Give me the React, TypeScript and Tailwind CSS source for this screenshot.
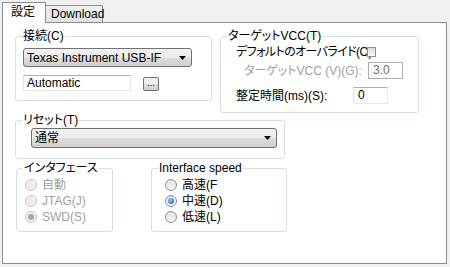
import React from 'react';

const font = "font-['Liberation_Sans','Noto_Sans_CJK_JP',sans-serif] [font-feature-settings:'palt']";

function Group({ title, className, children }: { title: string; className: string; children?: React.ReactNode }) {
  return (
    <div className={`relative border border-[#d5dfe5] rounded-[3px] ${className}`}>
      <span className="absolute -top-[8px] left-[6px] bg-white px-[1px] leading-[14px] text-black">{title}</span>
      {children}
    </div>
  );
}

function Combo({ text, className }: { text: string; className: string }) {
  return (
    <div
      className={`flex items-center justify-between border border-[#707070] rounded-[3px] bg-[linear-gradient(#f2f2f2_0%,#ebebeb_50%,#dddddd_50%,#cfcfcf_100%)] pl-[3px] pr-[5px] ${className}`}
    >
      <span className="leading-[14px]">{text}</span>
      <svg width="7" height="4" viewBox="0 0 7 4">
        <path d="M0 0h7L3.5 4z" fill="#000" />
      </svg>
    </div>
  );
}

function Radio({ label, checked, disabled }: { label: string; checked?: boolean; disabled?: boolean }) {
  return (
    <div className="flex items-center h-[16px]">
      <span
        className={`w-[12px] h-[12px] rounded-full border flex items-center justify-center ${
          disabled ? 'border-[#c6c6c6] bg-[#eeeeee]' : 'border-[#8e8f8f] bg-[linear-gradient(#e0e0e0,#fbfbfb)]'
        }`}
      >
        {checked && (
          <span
            className={`w-[6px] h-[6px] rounded-full ${
              disabled ? 'bg-[#a8a8a8]' : 'bg-[radial-gradient(circle_at_40%_35%,#7fd0ff,#0c58a8)]'
            }`}
          />
        )}
      </span>
      <span className={`ml-[5px] leading-[14px] ${disabled ? 'text-[#a0a0a0]' : 'text-black'}`}>{label}</span>
    </div>
  );
}

export default function App() {
  return (
    <div className={`w-[450px] h-[267px] bg-[#f0f0f0] pt-[2px] pl-[2px] text-[12px] text-black ${font}`}>
      <div className="flex items-end h-[20px]">
        <div className="relative z-10 w-[44px] h-[21px] -mb-px bg-white border border-b-0 border-[#898c95] pl-[8px] pt-[2px] leading-[14px]">
          設定
        </div>
        <div className="w-[57px] h-[17px] bg-[linear-gradient(#f2f2f2,#e3e3e3)] border border-b-0 border-l-0 border-[#898c95] pl-[5px] pt-[1px] leading-[14px]">
          Download
        </div>
      </div>
      <div className="w-[445px] h-[242px] border border-[#898c95] bg-white pl-[12px] pt-[13px]">
        <div className="flex items-start">
          <Group title="接続(C)" className="w-[197px] h-[65px] pl-[7px] pt-[11px]">
            <Combo text="Texas Instrument USB-IF" className="w-[169px] h-[19px]" />
            <div className="flex items-center mt-[8px]">
              <div className="w-[108px] h-[16px] border border-[#abadb3] border-r-[#e3e9ef] border-b-[#e3e9ef] border-l-[#e2e3ea] pl-[3px] leading-[14px]">
                Automatic
              </div>
              <div className="ml-[12px] mt-[2px] w-[16px] h-[14px] border border-[#707070] rounded-[2px] bg-[linear-gradient(#f2f2f2_0%,#ebebeb_50%,#dddddd_50%,#cfcfcf_100%)] text-[9px] leading-[10px] text-center">
                ...
              </div>
            </div>
          </Group>
          <Group title="ターゲットVCC(T)" className="ml-[8px] w-[199px] h-[77px] pl-[15px] pt-[8px]">
            <div className="flex items-center h-[14px]">
              <span className="leading-[14px] tracking-[-0.6px]">デフォルトのオーバライド(O)</span>
              <span className="-ml-[5px] w-[9px] h-[10px] border border-[#8e8f8f] bg-[linear-gradient(#dcdcdc,#f8f8f8)]" />
            </div>
            <div className="flex items-center mt-[3px]">
              <span className="ml-[8px] w-[124px] leading-[14px] text-[#a0a0a0]">ターゲットVCC (V)(G):</span>
              <div className="w-[35px] h-[17px] border border-[#afafaf] pl-[4px] leading-[15px] text-[#6d6d6d]">3.0</div>
            </div>
            <div className="flex items-center mt-[8px]">
              <span className="w-[117px] leading-[14px]">整定時間(ms)(S):</span>
              <div className="w-[35px] h-[17px] border border-[#abadb3] border-r-[#e3e9ef] border-b-[#e3e9ef] border-l-[#e2e3ea] pl-[4px] leading-[15px]">
                0
              </div>
            </div>
          </Group>
        </div>
        <Group title="リセット(T)" className="mt-[7px] w-[270px] h-[39px] pl-[15px] pt-[7px]">
          <Combo text="通常" className="w-[246px] h-[20px]" />
        </Group>
        <div className="flex mt-[9px] ml-[1px]">
          <Group title="インタフェース" className="w-[97px] h-[64px] pl-[8px] pt-[8px]">
            <Radio label="自動" disabled />
            <Radio label="JTAG(J)" disabled />
            <Radio label="SWD(S)" checked disabled />
          </Group>
          <Group title="Interface speed" className="ml-[38px] w-[136px] h-[64px] pl-[13px] pt-[8px]">
            <Radio label="高速(F" />
            <Radio label="中速(D)" checked />
            <Radio label="低速(L)" />
          </Group>
        </div>
      </div>
    </div>
  );
}
